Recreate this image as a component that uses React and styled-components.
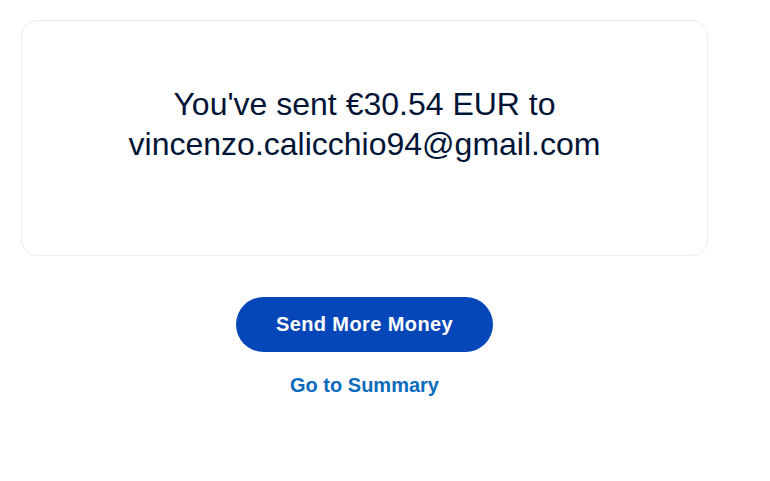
import React from 'react';
import styled, { createGlobalStyle } from 'styled-components';

const GlobalStyle = createGlobalStyle`
    body {
        margin: 0;
        background: #ffffff;
        font-family: "Liberation Sans", Arial, sans-serif;
    }
`;

const Page = styled.div`
    width: 770px;
    padding: 20px 0 0 21px;
    box-sizing: border-box;
`;

const Column = styled.div`
    width: 687px;
    display: flex;
    flex-direction: column;
    align-items: center;
`;

const Card = styled.div`
    width: 100%;
    height: 236px;
    box-sizing: border-box;
    border: 1px solid #ededed;
    border-radius: 16px;
    display: flex;
    align-items: center;
    justify-content: center;
    padding-bottom: 28px;
`;

const Message = styled.p`
    margin: 0;
    text-align: center;
    color: #001435;
    font-size: 32px;
    line-height: 40px;
`;

const PrimaryButton = styled.button`
    margin-top: 41px;
    width: 257px;
    height: 55px;
    border: none;
    border-radius: 28px;
    background: #0546b8;
    color: #ffffff;
    font-family: inherit;
    font-size: 20px;
    font-weight: 700;
    letter-spacing: 0.4px;
    cursor: pointer;
`;

const TextLink = styled.a`
    margin-top: 21px;
    color: #0b6bbd;
    font-size: 20px;
    font-weight: 700;
    text-decoration: none;
    line-height: 24px;
`;

const App = () => {
    return (
        <Page>
            <GlobalStyle />
            <Column>
                <Card>
                    <Message>
                        You've sent €30.54 EUR to<br />
                        vincenzo.calicchio94@gmail.com
                    </Message>
                </Card>
                <PrimaryButton>Send More Money</PrimaryButton>
                <TextLink href="#">Go to Summary</TextLink>
            </Column>
        </Page>
    );
}

export default App;
